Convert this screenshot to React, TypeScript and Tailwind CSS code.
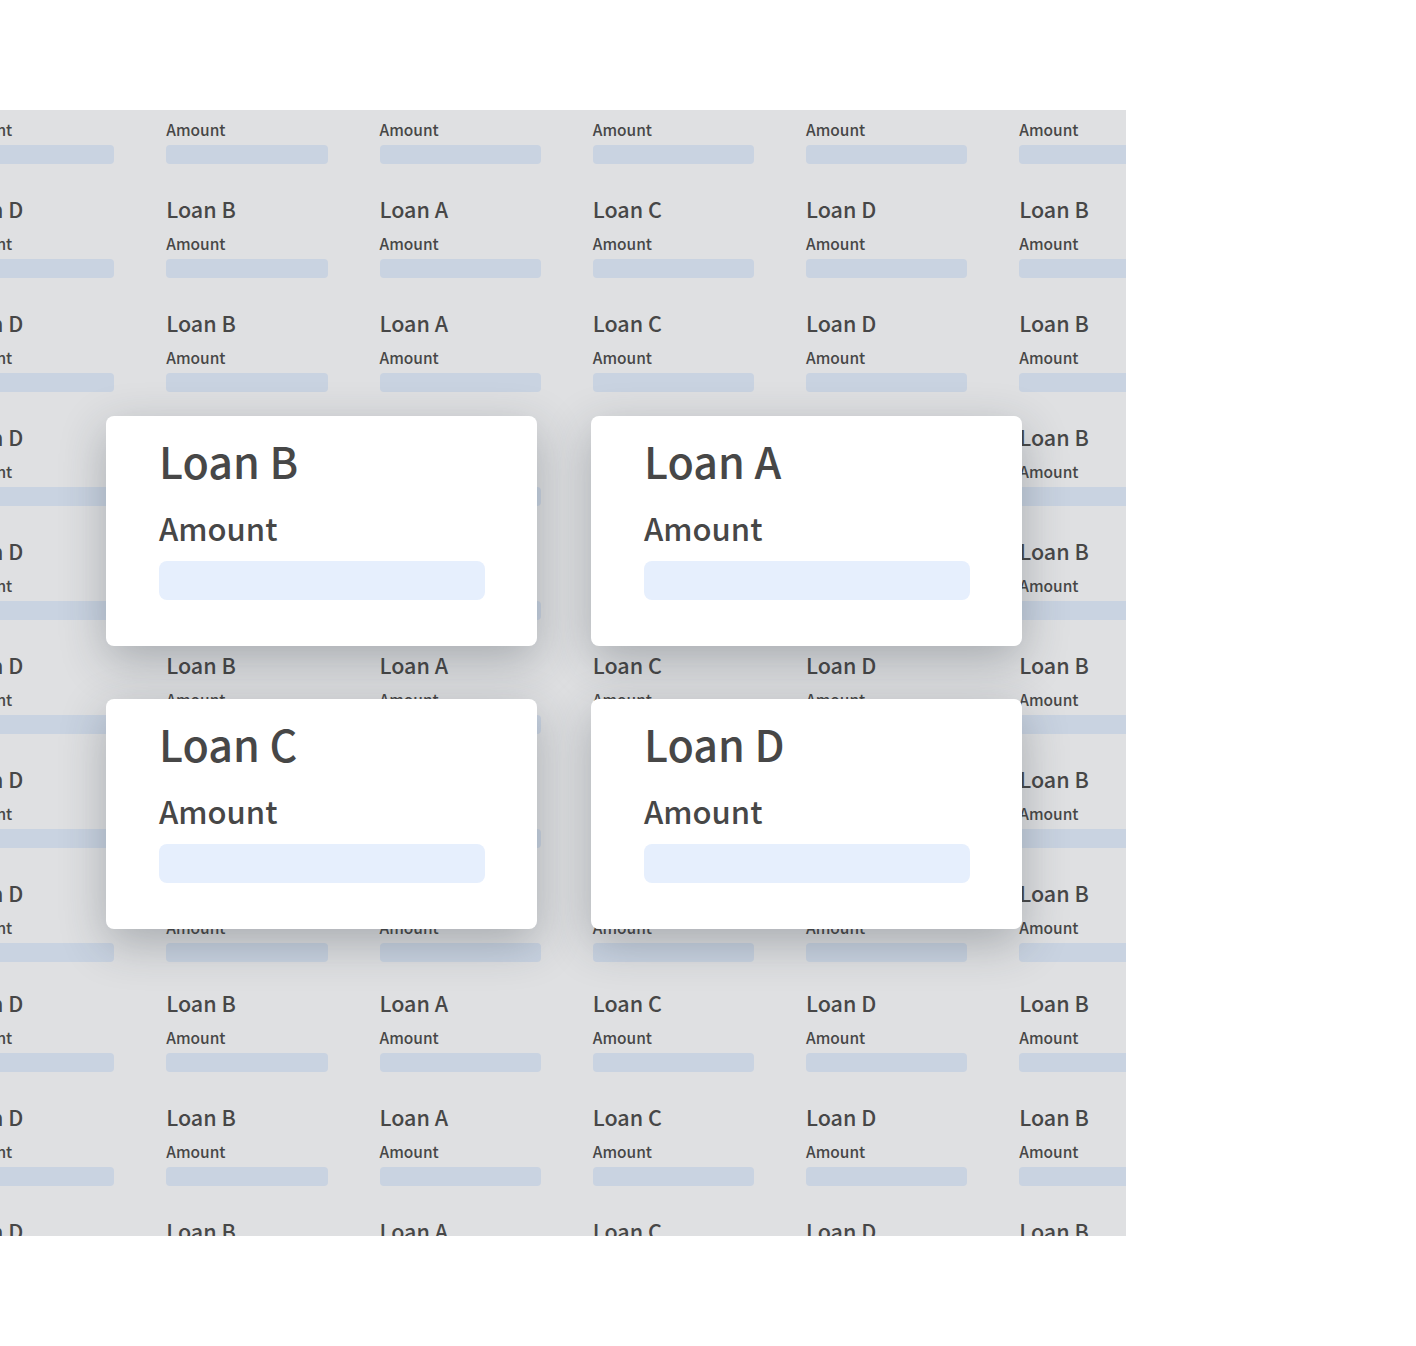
const order = ['D', 'B', 'A', 'C', 'D', 'B'];
const rows = Array.from({ length: 11 }, (_, i) => i);

function TileSmall({ letter }: { letter: string }) {
  return (
    <div className="w-[161.25px] shrink-0 h-[114px] flex flex-col">
      <div className="h-[30px] text-[21.5px] leading-[30px] font-medium text-[#474747] whitespace-nowrap">
        Loan {letter}
      </div>
      <div className="mt-[8px] h-[22px] text-[15.5px] leading-[22px] font-medium text-[#474747] whitespace-nowrap">
        Amount
      </div>
      <div className="mt-[5px] h-[19px] rounded-[4px] bg-[#c9d3e1]" />
    </div>
  );
}

function TileBig({ letter }: { letter: string }) {
  return (
    <div className="h-[230px] rounded-[8px] bg-white shadow-[0_14px_46px_rgba(40,50,60,0.3)] pl-[53px] pr-[52px] pt-[14px]">
      <div className="h-[60px] text-[43px] leading-[60px] font-medium text-[#474747] whitespace-nowrap">
        Loan {letter}
      </div>
      <div className="mt-[16px] h-[44px] text-[31px] leading-[44px] font-medium text-[#474747] whitespace-nowrap">
        Amount
      </div>
      <div className="mt-[11px] h-[39px] rounded-[8px] bg-[#e6effd]" />
    </div>
  );
}

export default function App() {
  return (
    <div
      className="w-[1416px] h-[1346px] bg-white pt-[110px]"
      style={{ fontFamily: '"Noto Sans CJK SC", "Noto Sans", sans-serif' }}
    >
      <div className="relative w-[1126px] h-[1126px] bg-[#dfe0e2] overflow-hidden">
        <div className="-ml-[47px] -mt-[30px] flex flex-col">
          {rows.map((r) => (
            <div key={r} className={`flex gap-[52px] ${r === 8 ? '-mt-[4px]' : ''}`}>
              {order.map((l, i) => (
                <TileSmall key={i} letter={l} />
              ))}
            </div>
          ))}
        </div>

        <div className="absolute left-[106px] top-[306px] grid grid-cols-[431px_431px] gap-x-[54px] gap-y-[53px]">
          <TileBig letter="B" />
          <TileBig letter="A" />
          <TileBig letter="C" />
          <TileBig letter="D" />
        </div>
      </div>
    </div>
  );
}
